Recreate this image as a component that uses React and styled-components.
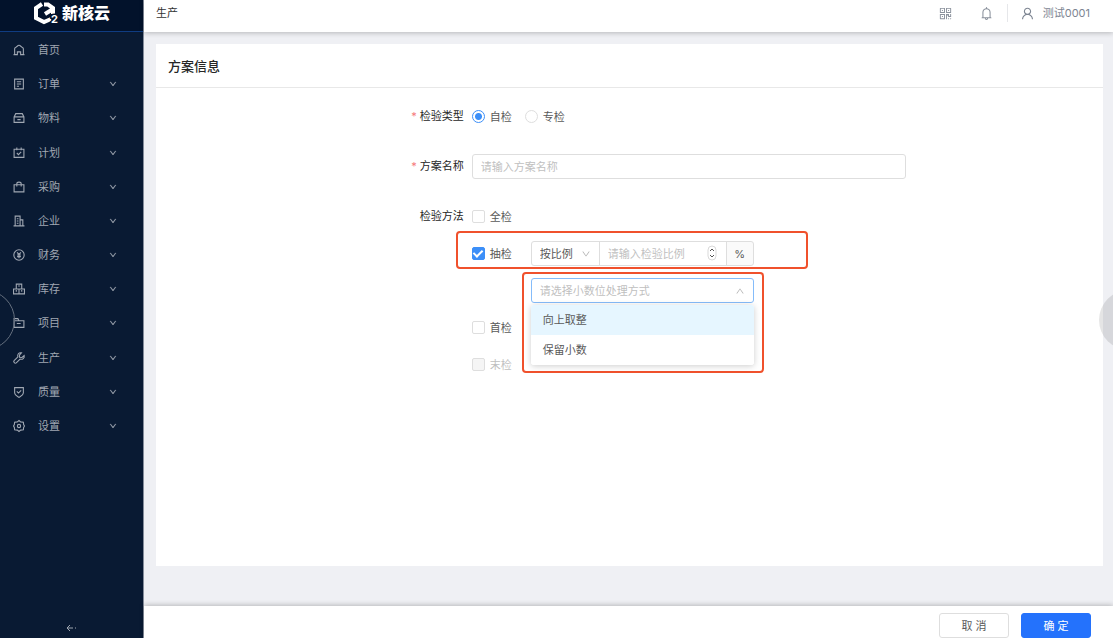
import React, { useState } from 'react';
import styled, { createGlobalStyle, css } from 'styled-components';
import {
  AiOutlineBell,
  AiOutlineDown,
  AiOutlineQrcode,
  AiOutlineUp,
  AiOutlineUser
} from 'react-icons/ai';

const menu = [
  {
    name: '首页',
    icon: (
      <path d="M3 19V9c0-1 .3-1.500 1-2l5.500-4.300c1-.7 2-.7 3 0L18 7c.7.5 1 1 1 2v10M1 19.500h7v-5h6v5h7" />
    ),
    leaf: true
  },
  { name: '订单', icon: <path d="M3 2h16v18H3zM7 7h8M7 11h8M7 15h4" /> },
  {
    name: '物料',
    icon: <path d="M2 9l3-6h12l3 6v10H2zM2 9h18M8 14h6" />
  },
  {
    name: '计划',
    icon: <path d="M2 4h18v15H2zM7 1v5M15 1v5M7 11l3 3 5-5" />
  },
  {
    name: '采购',
    icon: <path d="M2 7h18v13H2zM7 10V5c0-4 8-4 8 0v5" />
  },
  {
    name: '企业',
    icon: <path d="M4 20V2h9v18M13 9h5v11M1 20h20M7 7h3M7 11h3M7 15h3" />
  },
  {
    name: '财务',
    icon: (
      <>
        <circle cx="11" cy="11" r="9.500" />
        <path d="M7.500 6l3.500 4 3.500-4M11 10v7M7.500 11h7M7.500 14h7" />
      </>
    )
  },
  {
    name: '库存',
    icon: <path d="M6 2h10v9H6zM1 11h10v9H1zM11 11h10v9H11zM11 4v3M6 13v3M16 13v3" />
  },
  {
    name: '项目',
    icon: <path d="M2 19V3h7l2 4h9v12zM2 7h9M7 12h7" />
  },
  {
    name: '生产',
    icon: (
      <path d="M15.500 1.500c-5-1-8 3-6.500 7.500L2 16c-2 2 1.500 6 4 4l7-7c4.500 1.500 8.500-2 7.500-6.500L16.500 10 12 9.500V5.500z" />
    )
  },
  {
    name: '质量',
    icon: <path d="M3 3h16v10c0 4-5 6-8 8-3-2-8-4-8-8zM7 10l3 3 5-5" />
  },
  {
    name: '设置',
    icon: (
      <>
        <path d="M8 3.500L11 1l3 2.500 5 .5.500 4.500L21 11l-1.500 2.500L19 18l-5 .5-3 2.500-3-2.500-5-.5-.5-4.500L1 11l1.500-2.500L3 4z" />
        <circle cx="11" cy="11" r="3" />
      </>
    )
  }
];

const methods = ['向上取整', '保留小数'];

const App = () => {
  const [type, setType] = useState('自检');
  const [active, setActive] = useState(methods[0]);

  return (
    <Layout>
      <GlobalStyle />
      <Sidebar>
        <Logo>
          <LogoMark viewBox="0 0 26 24">
            <path d="M9 3L3 7v10l8 4 7-3" />
            <path d="M11 3.500h4l5 3.500v6M20 8l-8 5" />
            <text x="18" y="22">
              2
            </text>
          </LogoMark>
          新核云
        </Logo>
        <Menu>
          {menu.map(item => (
            <li key={item.name}>
              <MenuLink href="#">
                <MenuIcon viewBox="0 0 22 22">{item.icon}</MenuIcon>
                {item.name}
                {!item.leaf && <AiOutlineDown />}
              </MenuLink>
            </li>
          ))}
        </Menu>
        <Collapse aria-label="收起">
          <svg viewBox="0 0 11 8" width="11" height="8">
            <path d="M4 1L1 4l3 3M1 4h6M9 4h1" />
          </svg>
        </Collapse>
      </Sidebar>

      <Main>
        <Header>
          <h1>生产</h1>
          <IconButton aria-label="二维码">
            <AiOutlineQrcode />
          </IconButton>
          <IconButton aria-label="通知">
            <AiOutlineBell />
          </IconButton>
          <User>
            <AiOutlineUser />
            测试0001
          </User>
        </Header>

        <Card>
          <CardTitle>方案信息</CardTitle>
          <Form>
            <Label as="span" $required>
              检验类型
            </Label>
            <Choices>
              {['自检', '专检'].map(name => (
                <Choice key={name}>
                  <Radio
                    name="type"
                    checked={type === name}
                    onChange={() => setType(name)}
                  />
                  {name}
                </Choice>
              ))}
            </Choices>

            <Label htmlFor="plan" $required>
              方案名称
            </Label>
            <Input id="plan" placeholder="请输入方案名称" />

            <Label as="span">检验方法</Label>
            <Methods>
              <MethodRow>
                <Choice>
                  <Checkbox />
                  全检
                </Choice>
              </MethodRow>
              <MethodRow>
                <Choice>
                  <Checkbox defaultChecked />
                  抽检
                </Choice>
                <Group>
                  <SelectBox>
                    <Select aria-label="抽检方式">
                      <option>按比例</option>
                    </Select>
                    <AiOutlineDown />
                  </SelectBox>
                  <NumberBox>
                    <Input
                      type="number"
                      aria-label="检验比例"
                      placeholder="请输入检验比例"
                    />
                    <Stepper viewBox="0 0 10 16">
                      <rect x="1" y="1" width="8" height="14" rx="4" />
                      <path d="M3 6l2-2 2 2M3 10l2 2 2-2" />
                    </Stepper>
                  </NumberBox>
                  <Addon>%</Addon>
                </Group>
                <SampleMark />
              </MethodRow>
              <MethodRow $indent>
                <SelectBox $wide>
                  <Select aria-label="小数位处理方式" $open>
                    <option>请选择小数位处理方式</option>
                  </Select>
                  <AiOutlineUp />
                  <Dropdown role="listbox">
                    {methods.map(name => (
                      <Option
                        key={name}
                        role="option"
                        aria-selected={active === name}
                        $active={active === name}
                        onMouseEnter={() => setActive(name)}
                      >
                        {name}
                      </Option>
                    ))}
                  </Dropdown>
                  <SelectMark />
                </SelectBox>
              </MethodRow>
              <MethodRow>
                <Choice>
                  <Checkbox />
                  首检
                </Choice>
              </MethodRow>
              <MethodRow>
                <Choice $disabled>
                  <Checkbox disabled />
                  末检
                </Choice>
              </MethodRow>
            </Methods>
          </Form>
        </Card>

        <Footer>
          <Button>取 消</Button>
          <Button $primary>确 定</Button>
        </Footer>
      </Main>
      <EdgeRing />
      <EdgeDisc />
    </Layout>
  );
};

export default App;

// Styled Components

const GlobalStyle = createGlobalStyle`
  * {
    box-sizing: border-box;
  }
  body {
    margin: 0;
    background: #eff0f4;
  }
  body, button, input, select {
    font-family: Inter, 'Noto Sans CJK SC', sans-serif;
    font-size: 11px;
    line-height: 16px;
    color: #595959;
  }
`;

const Layout = styled.div`
  display: flex;
  min-height: 100vh;
`;

const Sidebar = styled.nav`
  display: flex;
  flex-direction: column;
  flex: 0 0 144px;
  background: #091a33;
  border-right: 1px solid #858d9b;
`;

const Logo = styled.div`
  display: flex;
  align-items: center;
  justify-content: center;
  gap: 3px;
  height: 32px;
  padding-bottom: 5px;
  background: #02122b;
  border-bottom: 1px solid #0f3c82;
  color: #fff;
  font-size: 16px;
  font-weight: 900;
  line-height: 24px;
`;

const LogoMark = styled.svg`
  width: 26px;
  height: 24px;
  fill: none;
  stroke: #fff;
  stroke-width: 4;
  overflow: visible;

  text {
    fill: #fff;
    stroke: #02122b;
    stroke-width: 3;
    paint-order: stroke;
    font-size: 11px;
    font-weight: 700;
  }
`;

const Menu = styled.ul`
  display: grid;
  grid-auto-rows: 1fr;
  height: 410px;
  margin: 1px 0 0;
  padding: 0;
  list-style: none;
`;

const MenuLink = styled.a`
  display: flex;
  align-items: center;
  height: 100%;
  padding: 0 26px 0 13px;
  color: #a0a7b2;
  text-decoration: none;

  > svg:last-child:not(:first-child) {
    width: 8px;
    height: 8px;
    margin-left: auto;
    stroke: currentColor;
    stroke-width: 40;
  }
`;

const MenuIcon = styled.svg`
  width: 12px;
  height: 12px;
  margin-right: 13px;
  fill: none;
  stroke: currentColor;
  stroke-width: 2;
  overflow: visible;
`;

const Collapse = styled.button`
  display: flex;
  justify-content: center;
  margin-top: auto;
  padding: 6px;
  border: none;
  background: transparent;

  svg {
    fill: none;
    stroke: #a0a7b2;
  }
`;

const Main = styled.main`
  display: flex;
  flex-direction: column;
  flex: 1;
  min-width: 0;
`;

const Header = styled.header`
  display: flex;
  align-items: center;
  height: 32px;
  padding: 0 22px 6px 12px;
  background: #fff;
  box-shadow: 0 1px 5px rgba(0, 0, 0, 0.24);

  h1 {
    margin: 0 auto 0 0;
    color: #333;
    font-size: 11px;
    font-weight: 400;
  }
`;

const IconButton = styled.button`
  display: flex;
  margin-right: 26px;
  padding: 0;
  border: none;
  background: transparent;
  color: #8a919c;
  font-size: 15px;

  & + & {
    margin-right: 13px;
  }
`;

const User = styled.div`
  display: flex;
  align-items: center;
  gap: 8px;
  padding: 1px 1px 1px 12px;
  border-left: 1px solid #e6e7ea;
  color: #7d8592;

  svg {
    font-size: 15px;
  }
`;

const Card = styled.section`
  flex: 1;
  margin: 12px 10px 40px 12px;
  background: #fff;
`;

const CardTitle = styled.h2`
  margin: 0;
  padding: 14px 12px 13px;
  border-bottom: 1px solid #e8e8e8;
  color: #262626;
  font-size: 13px;
  font-weight: 500;
`;

const Form = styled.form`
  display: grid;
  grid-template-columns: 8fr 11fr 5fr;
  row-gap: 25px;
  padding: 16px 0;

  > :nth-child(odd) {
    grid-column: 1;
  }
  > :nth-child(even) {
    grid-column: 2;
  }
`;

const Label = styled.label`
  height: 25px;
  padding-right: 8px;
  color: #262626;
  line-height: 25px;
  text-align: right;

  ${props =>
    props.$required &&
    css`
      &::before {
        content: '*';
        margin-right: 3px;
        color: #f5797c;
      }
    `}
`;

const Choices = styled.div`
  display: flex;
  gap: 13px;
`;

const Choice = styled.label`
  display: flex;
  align-items: center;
  gap: 5px;
  color: ${props => (props.$disabled ? '#bfbfbf' : '#595959')};
`;

const Radio = styled.input.attrs({ type: 'radio' })`
  appearance: none;
  width: 13px;
  height: 13px;
  margin: 0;
  border: 1px solid #dedede;
  border-radius: 50%;

  &:checked {
    border-color: #3c8ff8;
    background: radial-gradient(circle, #3c8ff8 3px, #fff 4px);
  }
`;

const Checkbox = styled.input.attrs({ type: 'checkbox' })`
  display: grid;
  place-items: center;
  appearance: none;
  width: 13px;
  height: 13px;
  margin: 0;
  border: 1px solid #dedede;
  border-radius: 2px;
  background: #fff;

  &:checked {
    border-color: #3c8ff8;
    background: #3c8ff8;
  }
  &:checked::after {
    content: '';
    width: 4px;
    height: 7px;
    margin-bottom: 2px;
    border: solid #fff;
    border-width: 0 2px 2px 0;
    transform: rotate(45deg);
  }
  &:disabled {
    background: #f5f5f5;
  }
`;

const Input = styled.input`
  width: 100%;
  height: 25px;
  padding: 0 8px;
  border: 1px solid #dedede;
  border-radius: 3px;
  background: #fff;
  outline: none;

  &::placeholder {
    color: #bfbfbf;
  }
`;

const Methods = styled.div`
  display: flex;
  flex-direction: column;
  gap: 12px;
`;

const MethodRow = styled.div`
  position: relative;
  display: flex;
  gap: 19px;
  height: 25px;
  padding-left: ${props => (props.$indent ? '59px' : '0')};
`;

const Group = styled.div`
  display: flex;
  width: 223px;
`;

const SelectBox = styled.div`
  position: relative;
  flex: 0 0 ${props => (props.$wide ? '223px' : '69px')};

  > svg {
    position: absolute;
    top: 8px;
    right: 9px;
    color: #b0b0b0;
    font-size: 10px;
    pointer-events: none;
  }
`;

const Select = styled.select`
  appearance: none;
  width: 100%;
  height: 25px;
  padding: 0 8px;
  border: 1px solid ${props => (props.$open ? '#85bcfa' : '#dedede')};
  border-radius: ${props => (props.$open ? '3px' : '3px 0 0 3px')};
  background: #fff;
  color: ${props => (props.$open ? '#bfbfbf' : '#595959')};
  outline: none;
`;

const NumberBox = styled.div`
  position: relative;
  flex: 1;
  margin: 0 -1px;

  input {
    appearance: textfield;
    border-radius: 0;
  }
  input::-webkit-inner-spin-button {
    display: none;
  }
`;

const Stepper = styled.svg`
  position: absolute;
  top: 4px;
  right: 10px;
  width: 10px;
  height: 16px;
  fill: none;
  stroke: #555;

  rect {
    stroke: #d9d9d9;
  }
`;

const Addon = styled.span`
  flex: 0 0 28px;
  border: 1px solid #dedede;
  border-radius: 0 3px 3px 0;
  background: #fafafa;
  line-height: 24px;
  text-align: center;
`;

const Dropdown = styled.ul`
  position: absolute;
  z-index: 10;
  top: 27px;
  left: 0;
  width: 100%;
  margin: 0;
  padding: 0;
  border-radius: 3px;
  background: #fff;
  box-shadow: 0 1px 6px rgba(0, 0, 0, 0.2);
  list-style: none;
  overflow: hidden;
`;

const Option = styled.li`
  padding: 7px 12px;
  background: ${props => (props.$active ? '#e6f6ff' : '#fff')};
`;

const Mark = styled.div`
  position: absolute;
  border: 2px solid #f0512c;
  border-radius: 4px;
  pointer-events: none;
`;

const SampleMark = styled(Mark)`
  top: -10px;
  left: -16px;
  width: 352px;
  height: 38px;
`;

const SelectMark = styled(Mark)`
  top: -6px;
  right: -10px;
  left: -9px;
  height: 101px;
`;

const Footer = styled.footer`
  display: flex;
  justify-content: flex-end;
  gap: 12px;
  padding: 7px 22px 0;
  background: #fff;
  box-shadow: 0 -1px 5px rgba(0, 0, 0, 0.24);
`;

const Button = styled.button`
  width: 70px;
  height: 25px;
  padding: 0;
  border: 1px solid ${props => (props.$primary ? '#2472fc' : '#dedede')};
  border-radius: 3px;
  background: ${props => (props.$primary ? '#2472fc' : '#fff')};
  color: ${props => (props.$primary ? '#fff' : '#595959')};
`;

const Edge = styled.div`
  position: fixed;
  top: calc(50% - 29px);
  width: 60px;
  height: 60px;
  border-radius: 50%;
  pointer-events: none;
`;

const EdgeRing = styled(Edge)`
  left: -45px;
  border: 1px solid #66707f;
`;

const EdgeDisc = styled(Edge)`
  right: -46px;
  background: rgba(0, 0, 0, 0.1);
`;
